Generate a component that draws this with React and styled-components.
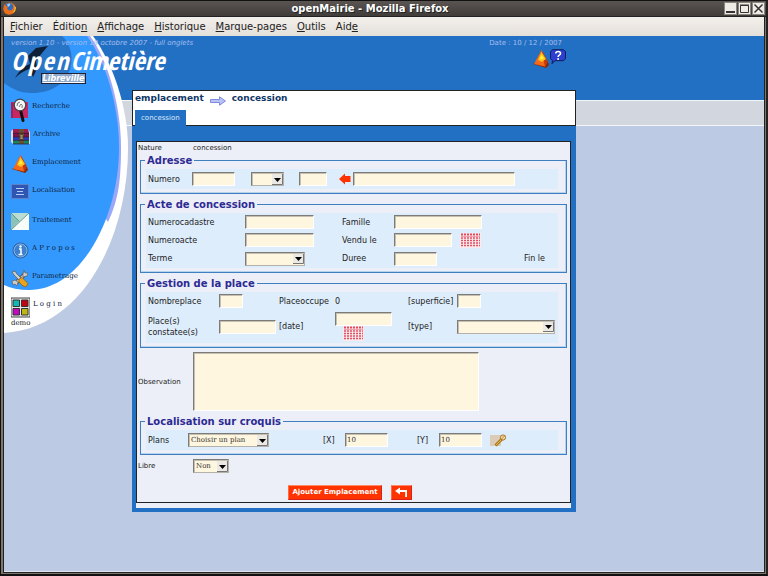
import React from 'react';
import styled, { createGlobalStyle, css } from 'styled-components';

const GlobalStyle = createGlobalStyle`
  * {
    box-sizing: border-box;
  }

  body {
    margin: 0;
    background: #000;
    font-family: 'DejaVu Sans', Verdana, sans-serif;
  }

  a {
    color: inherit;
    text-decoration: none;
  }
`;

const Window = styled.div`
  display: flex;
  flex-direction: column;
  min-height: 100vh;
  background: #80756d;
  border: 1px solid #111;
  border-right: 2px solid #222;
  border-bottom-width: 2px;
`;

const TitleBar = styled.div`
  display: flex;
  align-items: center;
  height: 16px;
  padding: 0 1px 0 2px;
  background: linear-gradient(#5b5552, #403c3a);
  border-bottom: 1px solid #1c1a19;
  color: #fff;

  h1 {
    flex: 1;
    margin: 0;
    font-size: 10px;
    line-height: 14px;
    text-align: center;
    text-shadow: 1px 1px 0 #222;
  }
`;

const WindowButtons = styled.div`
  display: flex;
  gap: 1px;
`;

const WindowButton = styled.button`
  width: 13px;
  height: 13px;
  padding: 0;
  border: 1px solid #8a857f;
  background: #efebe5;

  svg {
    display: block;
  }
`;

const MenuBar = styled.nav`
  display: flex;
  align-items: center;
  gap: 10px;
  height: 19px;
  margin: 0 2px 0 3px;
  padding-left: 6px;
  background: linear-gradient(#f3f0ec, #e4dfd9);
  box-shadow: 0 0 0 1px #222;
  color: #222;
  font-size: 10px;
  line-height: 14px;
`;

const Page = styled.div`
  position: relative;
  flex: 1;
  margin: 0 2px 2px 3px;
  border-bottom: 1px solid #dfe6f2;
  background: linear-gradient(
    #2270c3 64px, #f4f6fa 64px, #f4f6fa 65px, #d1d6df 65px,
    #d1d6df 89px, #f4f6fa 89px, #f4f6fa 90px, #bccae4 90px
  );
  box-shadow: -1px 1px 0 #222, 1px 1px 0 #222;
`;

const Backdrop = styled.svg`
  position: absolute;
  left: 0;
  top: 0;
`;

const Columns = styled.div`
  position: relative;
  display: grid;
  grid-template-columns: 128px minmax(0, 444fr) minmax(0, 188fr);
`;

const Brand = styled.div`
  grid-column: 1 / 3;
  display: flex;
  justify-content: space-between;
  height: 54px;
  padding: 2px 10px 0 7px;
  color: #a4bdf0;
  font-size: 7px;
  line-height: 10px;
`;

const Version = styled.div`
  font-style: italic;
`;

const Logo = styled.div`
  color: #fff;
  font-family: 'Liberation Sans Narrow', 'Open Sans Condensed', 'Liberation Sans', sans-serif;
  font-size: 25px;
  font-style: italic;
  font-weight: bold;
  line-height: 25px;
  white-space: nowrap;

  span {
    letter-spacing: 2px;
  }
`;

const Town = styled.div`
  width: 45px;
  margin-left: 30px;
  border: 1px solid #223;
  background: #8fa9cc;
  color: #fff;
  font-size: 8px;
  font-style: italic;
  font-weight: bold;
  line-height: 9px;
  text-align: center;
  text-decoration: underline;
`;

const Meta = styled.div`
  display: flex;
  flex-direction: column;
  align-items: flex-end;

  p {
    margin: 0 4px 0 0;
    padding-bottom: 1px;
  }

  div {
    display: flex;
  }
`;

const Sidebar = styled.nav`
  padding: 8px 0 0 7px;
  color: #10243c;
  font-family: 'DejaVu Serif', serif;
  font-size: 7px;
`;

const NavGroup = styled.div`
  display: flex;
  flex-direction: column;
  margin-bottom: 2px;
`;

const NavLink = styled.a`
  display: flex;
  gap: 3px;
  height: 28px;
  line-height: 16px;

  svg {
    flex: none;
  }
`;

const User = styled.div`
  margin-top: -8px;
  color: #222;
  line-height: 10px;
`;

const Panel = styled.main`
  background: #2270c3;
  padding-bottom: 4px;
`;

const Heading = styled.header`
  display: flex;
  flex-direction: column;
  justify-content: space-between;
  height: 36px;
  padding-left: 2px;
  border: 1px solid #222;
  background: #fff;

  h2 {
    display: flex;
    align-items: center;
    gap: 6px;
    margin: 0;
    color: #0f3767;
    font-size: 9px;
    line-height: 15px;
  }

  svg {
    margin-top: 4px;
  }
`;

const Tab = styled.a`
  align-self: flex-start;
  margin: 0 0 -1px;
  padding: 0 6px;
  background: #2270c3;
  color: #dbe8fa;
  font-size: 7px;
  line-height: 16px;
`;

const Frame = styled.div`
  margin: 15px 5px 0 4px;
  border-bottom: 5px solid #eceff7;
`;

const Form = styled.form`
  padding: 0 1px 2px;
  border: 1px solid #222;
  background: #eceff7;
  color: #222;
  font-size: 7px;
`;

const Line = styled.div`
  display: grid;
  grid-template-columns: 55px minmax(0, 1fr);
  align-items: center;
  margin-bottom: ${props => props.$gap || 0}px;
  line-height: 12px;
`;

const Fieldset = styled.fieldset`
  min-width: 0;
  margin: 0 2px 4px;
  padding: 2px 8px 4px 5px;
  border: 1px solid #3f7fc0;
  box-shadow: inset -1px -1px 0 #b7d2ec;
  font-size: 8px;

  legend {
    margin-left: -1px;
    padding: 0 2px;
    color: #2d2a94;
    font-size: 10px;
    font-weight: bold;
    line-height: 13px;
  }
`;

const Grid = styled.div`
  display: grid;
  grid-template-columns: ${props => props.$columns};
  grid-template-rows: ${props => props.$rows};
  align-items: center;
  background: #deedfc;
  line-height: 11px;

  > * {
    min-width: 0;
  }

  > label:first-child, > .first {
    padding-left: 2px;
  }

  > .wide {
    grid-column: span 3;
  }
`;

const field = css`
  display: block;
  width: ${props => props.$width}px;
  height: 14px;
  margin: 0;
  border: 1px solid;
  border-color: #7d7b78 #fff #fff #7d7b78;
  border-radius: 0;
  outline: none;
  background-color: #fef6de;
  box-shadow: inset 1px 1px 0 #c4bfb0;
  color: #333;
  font-family: 'DejaVu Serif', serif;
  font-size: 7px;
`;

const Input = styled.input`
  ${field}
  padding: 0 1px;
`;

const arrow = "data:image/svg+xml,%3Csvg xmlns='http://www.w3.org/2000/svg' width='11' height='11'%3E%3Cpath fill='%23ece9e4' d='M0 0h11v11H0z'/%3E%3Cpath stroke='%23777' fill='none' d='M0 10.5h10.500V0'/%3E%3Cpath d='M2 4h7L5.500 8z'/%3E%3C/svg%3E";

const Select = styled.select`
  ${field}
  padding: 0 12px 0 2px;
  appearance: none;
  border-color: #7d7b78 #b5b1aa #b5b1aa #7d7b78;
  background-image: url("${arrow}");
  background-position: right center;
  background-repeat: no-repeat;
`;

const TextArea = styled.textarea`
  ${field}
  width: 76%;
  height: 59px;
  resize: none;
`;

const IconButton = styled.button`
  display: block;
  padding: 0;
  border: 0;
  background: none;
  justify-self: start;

  svg {
    display: block;
  }
`;

const DateCell = styled.div`
  button {
    margin-left: 8px;
  }
`;

const Actions = styled.div`
  display: flex;
  justify-content: center;
  gap: 9px;
  margin: 12px 7px 0 0;
`;

const ActionButton = styled.button`
  height: 15px;
  padding: 0 3px;
  border: 1px solid;
  border-color: #ff8a66 #d8201c #d8201c #ff6a40;
  background: #ff3300;
  color: #fff;
  font-family: 'DejaVu Sans', sans-serif;
  font-size: 7px;
  font-weight: bold;
  line-height: 13px;

  svg {
    display: block;
  }
`;

const FirefoxIcon = () => (
  <svg width="13" height="13" viewBox="0 0 13 13">
    <circle cx="6.500" cy="6.500" r="6" fill="#e8701a" />
    <circle cx="6" cy="5.300" r="4.300" fill="#2f6cc0" />
    <path d="M4 2.500q2-1.500 3.500-.5L6.500 4 5 5z" fill="#9cd0f0" />
    <path d="M1 2.500l2 1.500 2 .5-1 2 2 2 3-.5 3-5 .5 4q-1 5-6 5.500T.6 8z" fill="#e8701a" />
    <path d="M11 4q2 4-2 7l3-1.500 1-4z" fill="#f8c53a" />
  </svg>
);

const SearchIcon = () => (
  <svg width="18" height="24" viewBox="0 0 18 24">
    <path d="M0 4h17v16H0z" fill="#c82862" />
    <path d="M1 20V5" stroke="#7d1b4b" />
    <path d="M9.500 12l2.500 10.500" stroke="#111" strokeWidth="3" strokeLinecap="round" />
    <circle cx="9" cy="7" r="5.800" fill="#f6f6f6" stroke="#444" strokeWidth="1.300" />
    <path d="M6 8q0-4 3-4M10 6q2 1 1 4M8 9l2-3" stroke="#777" fill="none" />
  </svg>
);

const ArchiveIcon = () => (
  <svg width="19" height="20" viewBox="0 -2 19 20">
    <path d="M0 3l3-2h14l2 3v12H2L0 14z" fill="#dcd8e0" />
    <path d="M2 1h15l1 4H2z" fill="#a01b50" />
    <path d="M2 5h16v4H2z" fill="#7a1748" />
    <path d="M2 9h16v3H2z" fill="#2a3bc4" />
    <path d="M2 12h16v4H2z" fill="#178264" />
    <path d="M8 1h5v15H8z" fill="#6b5034" />
    <path d="M9 7h3v4H9z" fill="#d8c37a" stroke="#222" strokeWidth=".5" />
    <path d="M2 5.200h16M2 9h16M2 12.300h16M2 16h16" stroke="#31142c" strokeWidth=".7" />
  </svg>
);

const ConeIcon = () => (
  <svg width="18" height="20" viewBox="0 0 18 20">
    <path d="M1 15l5-3 10 1 1 3-3 3z" fill="#8c2808" />
    <path d="M9.500 1L2 15l11 2.500 2.500-5z" fill="#f46a1a" />
    <path d="M9.500 1l3.500 16.500 3-5z" fill="#c2370d" />
    <path d="M9.500 3L6 11l4 2 4-3z" fill="#ffc21c" />
    <path d="M9.500 6l-2 3.500 2.500 1 2-1.500z" fill="#ffee3a" />
  </svg>
);

const PlanIcon = () => (
  <svg width="18" height="18" viewBox="0 0 18 18">
    <path d="M.5 2.500h17v14H.5z" fill="#3056b4" stroke="#5d82c8" />
    <path d="M5 6.500h8M6 9.500h6M5 12.500h8" stroke="#b6cdf5" />
  </svg>
);

const TreatmentIcon = () => (
  <svg width="18" height="19" viewBox="0 0 18 19">
    <path d="M0 1h18v17H0z" fill="#e5f4ee" />
    <path d="M0 1h18L0 18z" fill="#b9ddd2" />
    <path d="M0 1l8 8-8 9z" fill="#8fc2b6" />
    <path d="M18 1v17H0z" fill="#f8fdf9" />
    <path d="M0 1l8.500 8.500M0 18L18 1" stroke="#5d9d92" />
  </svg>
);

const InfoIcon = () => (
  <svg width="18" height="20" viewBox="0 0 18 20">
    <circle cx="9.500" cy="10.500" r="7.500" fill="#3d80cc" stroke="#2a5d9c" />
    <circle cx="9.500" cy="10.500" r="6.500" fill="none" stroke="#83b4e8" />
    <path d="M8 9h2v5M7.500 14.500h4" stroke="#fff" strokeWidth="1.500" fill="none" />
    <circle cx="9.500" cy="6.500" r="1.200" fill="#fff" />
  </svg>
);

const ToolsIcon = () => (
  <svg width="18" height="20" viewBox="0 0 18 20">
    <path d="M15 5L5 15" stroke="#444" strokeWidth="4" />
    <path d="M15 5L5 15" stroke="#b9b9b9" strokeWidth="2.500" />
    <path d="M12 6l1-4 1 3h3l-1 3-4 1zM2 17l-1-4 3-1 3 2-1 4-2-2z" fill="#ccc" stroke="#555" strokeWidth=".6" />
    <path d="M1 4l3-1 2 3 5 5-2 2-6-6z" fill="#ccc" stroke="#555" strokeWidth=".7" />
    <path d="M8 11l3-1.500 6 6-2 3.500q-3 0-7-5z" fill="#eaa41c" stroke="#8a5a10" strokeWidth=".7" />
  </svg>
);

const LoginIcon = () => (
  <svg width="19" height="22" viewBox="0 0 19 22">
    <path d="M0 2h19v19H0z" fill="#e8e8e8" stroke="#444" />
    <path d="M2 4h6.500v6.500H2z" fill="#12b9b4" stroke="#333" />
    <path d="M10.500 4H17v6.500h-6.500z" fill="#c00410" stroke="#333" />
    <path d="M2 12.500h6.500V19H2z" fill="#c409c4" stroke="#333" />
    <path d="M10.500 12.500H17V19h-6.500z" fill="#bdb714" stroke="#333" />
  </svg>
);

const HelpIcon = () => (
  <svg width="16" height="15" viewBox="0 0 16 15">
    <path d="M2.500.7h11l2 2v7l-2 2H5l-3 3 .5-3-2-2v-7z" fill="#2b3fd0" stroke="#141b5e" />
    <path d="M5.700 4.500q.3-2 2.500-2 2.300 0 2.300 2 0 1-1.200 1.600T8.100 8" stroke="#fff" strokeWidth="1.600" fill="none" />
    <circle cx="8.100" cy="9.900" r="1" fill="#fff" />
  </svg>
);

const CalendarIcon = () => (
  <svg width="21" height="15" viewBox="0 0 21 15">
    <path d="M0 0h21v15H0z" fill="#fde9ea" />
    <path d="M1 1.500h19" stroke="#e04a60" strokeWidth="2" strokeDasharray="2 1" />
    <path d="M1 5h19M1 7.500h19M1 10h19M1 12.500h19" stroke="#dc5168" strokeWidth="1.500" strokeDasharray="2 1" />
    <path d="M1 3.500h19" stroke="#f0a0ac" />
  </svg>
);

const RedArrowIcon = () => (
  <svg width="12" height="12" viewBox="0 0 12 12">
    <path d="M0 6l6-5.500V3h5.500v6H6v2.500z" fill="#ff3300" />
  </svg>
);

const PickerIcon = () => (
  <svg width="17" height="13" viewBox="0 0 17 13">
    <path d="M0 1h11v11H0z" fill="#dccbb6" />
    <path d="M5.500 11.500L12 5" stroke="#a9761a" strokeWidth="3" />
    <path d="M6 11l5.500-5.500" stroke="#e6bb58" />
    <circle cx="13" cy="3.500" r="2.600" fill="#ecdcb4" stroke="#a9761a" />
    <path d="M11 5.500l4-4" stroke="#c08a20" />
  </svg>
);

const CrumbIcon = () => (
  <svg width="16" height="10" viewBox="0 0 16 10">
    <path d="M.5 3.500h9V.8l6 4.200-6 4.200V6.500h-9z" fill="#b9c2f2" stroke="#7d8be0" />
  </svg>
);

const MENU = [
  ['', 'F', 'ichier'], ['Éditio', 'n', ''], ['', 'A', 'ffichage'], ['', 'H', 'istorique'],
  ['', 'M', 'arque-pages'], ['', 'O', 'utils'], ['Aid', 'e', ''],
];

const NAV = [
  [
    ['Recherche', SearchIcon],
    ['Archive', ArchiveIcon],
    ['Emplacement', ConeIcon],
    ['Localisation', PlanIcon],
  ],
  [
    ['Traitement', TreatmentIcon],
    ['A P r o p o s', InfoIcon],
    ['Parametrage', ToolsIcon],
    ['L o g i n', LoginIcon],
  ],
];

const App = () => (
  <Window>
    <GlobalStyle />
    <TitleBar>
      <FirefoxIcon />
      <h1>openMairie - Mozilla Firefox</h1>
      <WindowButtons>
        <WindowButton aria-label="Réduire">
          <svg width="11" height="11"><path d="M1 9h9" stroke="#333" strokeWidth="2" /></svg>
        </WindowButton>
        <WindowButton aria-label="Agrandir">
          <svg width="11" height="11">
            <path d="M1.500 2.500h8v7h-8zM1 2h9" stroke="#333" fill="none" />
          </svg>
        </WindowButton>
        <WindowButton aria-label="Fermer">
          <svg width="11" height="11">
            <path d="M1.500 1.500l8 8M9.500 1.500l-8 8" stroke="#333" strokeWidth="1.500" />
          </svg>
        </WindowButton>
      </WindowButtons>
    </TitleBar>
    <MenuBar>
      {MENU.map(([before, key, after]) => (
        <a href="#" key={before + key + after}>
          {before}
          <u>{key}</u>
          {after}
        </a>
      ))}
    </MenuBar>
    <Page>
      <Backdrop width="126" height="300" viewBox="0 0 126 300">
        <path d="M0 0H89C108 26 124 70 124 112C124 200 80 292 0 297z" fill="#fff" />
        <path d="M0 0H86C104 24 117 70 117 112C117 150 113 166 104 186L60 120z" fill="#99a8f8" />
        <path d="M0 0H83C102 26 115 70 115 112C115 180 78 254 25 254Q10 254 0 249z" fill="#3399ff" />
        <path d="M0 0H58C76 16 70 57 28 57Q12 57 0 47z" fill="#2875c8" />
        <path d="M11 42q6-11 15-14l-2-8 8-8 12-2-6 7-6 8 1 8-4 8-4-8q-8 3-14 9z" fill="#0d2038" />
      </Backdrop>
      <Columns>
        <Brand>
          <div>
            <Version>version 1.10 - version 19 octobre 2007 - full onglets</Version>
            <Logo>
              <span>Open</span>
              Cimetière
            </Logo>
            <Town>Libreville</Town>
          </div>
          <Meta>
            <p>Date : 10 / 12 / 2007</p>
            <div>
              <a href="#" aria-label="Emplacement"><ConeIcon /></a>
              <a href="#" aria-label="Aide en ligne"><HelpIcon /></a>
            </div>
          </Meta>
        </Brand>
      </Columns>
      <Columns>
        <Sidebar>
          {NAV.map(group => (
            <NavGroup key={group[0][0]}>
              {group.map(([name, Icon]) => (
                <NavLink href="#" key={name}>
                  <Icon />
                  {name}
                </NavLink>
              ))}
            </NavGroup>
          ))}
          <User>demo</User>
        </Sidebar>
        <Panel>
          <Heading>
            <h2>
              emplacement
              <CrumbIcon />
              <span>concession</span>
            </h2>
            <Tab href="#">concession</Tab>
          </Heading>
          <Frame>
            <Form onSubmit={e => e.preventDefault()}>
              <Line>
                <span>Nature</span>
                <span>concession</span>
              </Line>
              <Fieldset>
                <legend>Adresse</legend>
                <Grid $columns="46fr 59fr 48fr 40fr 14fr 205fr" $rows="20px">
                  <label htmlFor="numero">Numero</label>
                  <Input id="numero" $width={43} />
                  <Select aria-label="Complement" $width={33}><option /></Select>
                  <Input aria-label="Type de voie" $width={28} />
                  <IconButton type="button" aria-label="Choisir la voie"><RedArrowIcon /></IconButton>
                  <Input aria-label="Voie" $width={162} />
                </Grid>
              </Fieldset>
              <Fieldset>
                <legend>Acte de concession</legend>
                <Grid $columns="99fr 97fr 52fr 66fr 64fr 34fr" $rows="18px 18px 19px">
                  <label htmlFor="cadastre">Numerocadastre</label>
                  <Input id="cadastre" $width={69} />
                  <label htmlFor="famille">Famille</label>
                  <Input id="famille" className="wide" $width={88} />
                  <label className="first" htmlFor="acte">Numeroacte</label>
                  <Input id="acte" $width={69} />
                  <label htmlFor="vendu">Vendu le</label>
                  <Input id="vendu" $width={58} />
                  <IconButton type="button" aria-label="Calendrier"><CalendarIcon /></IconButton>
                  <span />
                  <label className="first" htmlFor="terme">Terme</label>
                  <Select id="terme" $width={60}><option /></Select>
                  <label htmlFor="duree">Duree</label>
                  <Input id="duree" $width={43} />
                  <span />
                  <span>Fin le</span>
                </Grid>
              </Fieldset>
              <Fieldset>
                <legend>Gestion de la place</legend>
                <Grid $columns="73fr 60fr 56fr 73fr 49fr 101fr" $rows="18px 33px">
                  <label htmlFor="nombre">Nombreplace</label>
                  <Input id="nombre" $width={24} />
                  <span>Placeoccupe</span>
                  <span>0</span>
                  <label htmlFor="superficie">[superficie]</label>
                  <Input id="superficie" $width={24} />
                  <label className="first" htmlFor="constat">
                    Place(s)
                    <br />
                    constatee(s)
                  </label>
                  <Input id="constat" $width={57} />
                  <label htmlFor="date">[date]</label>
                  <DateCell>
                    <Input id="date" $width={57} />
                    <IconButton type="button" aria-label="Calendrier"><CalendarIcon /></IconButton>
                  </DateCell>
                  <label htmlFor="type">[type]</label>
                  <Select id="type" $width={98}><option /></Select>
                </Grid>
              </Fieldset>
              <Line $gap={4}>
                <label htmlFor="observation">Observation</label>
                <TextArea id="observation" />
              </Line>
              <Fieldset>
                <legend>Localisation sur croquis</legend>
                <Grid $columns="42fr 135fr 22fr 72fr 22fr 51fr 68fr" $rows="20px">
                  <label htmlFor="plans">Plans</label>
                  <Select id="plans" $width={81}><option>Choisir un plan</option></Select>
                  <label htmlFor="x">[X]</label>
                  <Input id="x" $width={43} defaultValue="10" />
                  <label htmlFor="y">[Y]</label>
                  <Input id="y" $width={43} defaultValue="10" />
                  <IconButton type="button" aria-label="Pointer sur le plan"><PickerIcon /></IconButton>
                </Grid>
              </Fieldset>
              <Line>
                <label htmlFor="libre">Libre</label>
                <Select id="libre" $width={36}><option>Non</option></Select>
              </Line>
              <Actions>
                <ActionButton type="submit">Ajouter Emplacement</ActionButton>
                <ActionButton type="button" aria-label="Retour">
                  <svg width="13" height="11" viewBox="0 0 13 11">
                    <path d="M0 4l5-3.500V3h7v7h-1.800V5H5v2.500z" fill="#fff" />
                  </svg>
                </ActionButton>
              </Actions>
            </Form>
          </Frame>
        </Panel>
      </Columns>
    </Page>
  </Window>
);

export default App;
